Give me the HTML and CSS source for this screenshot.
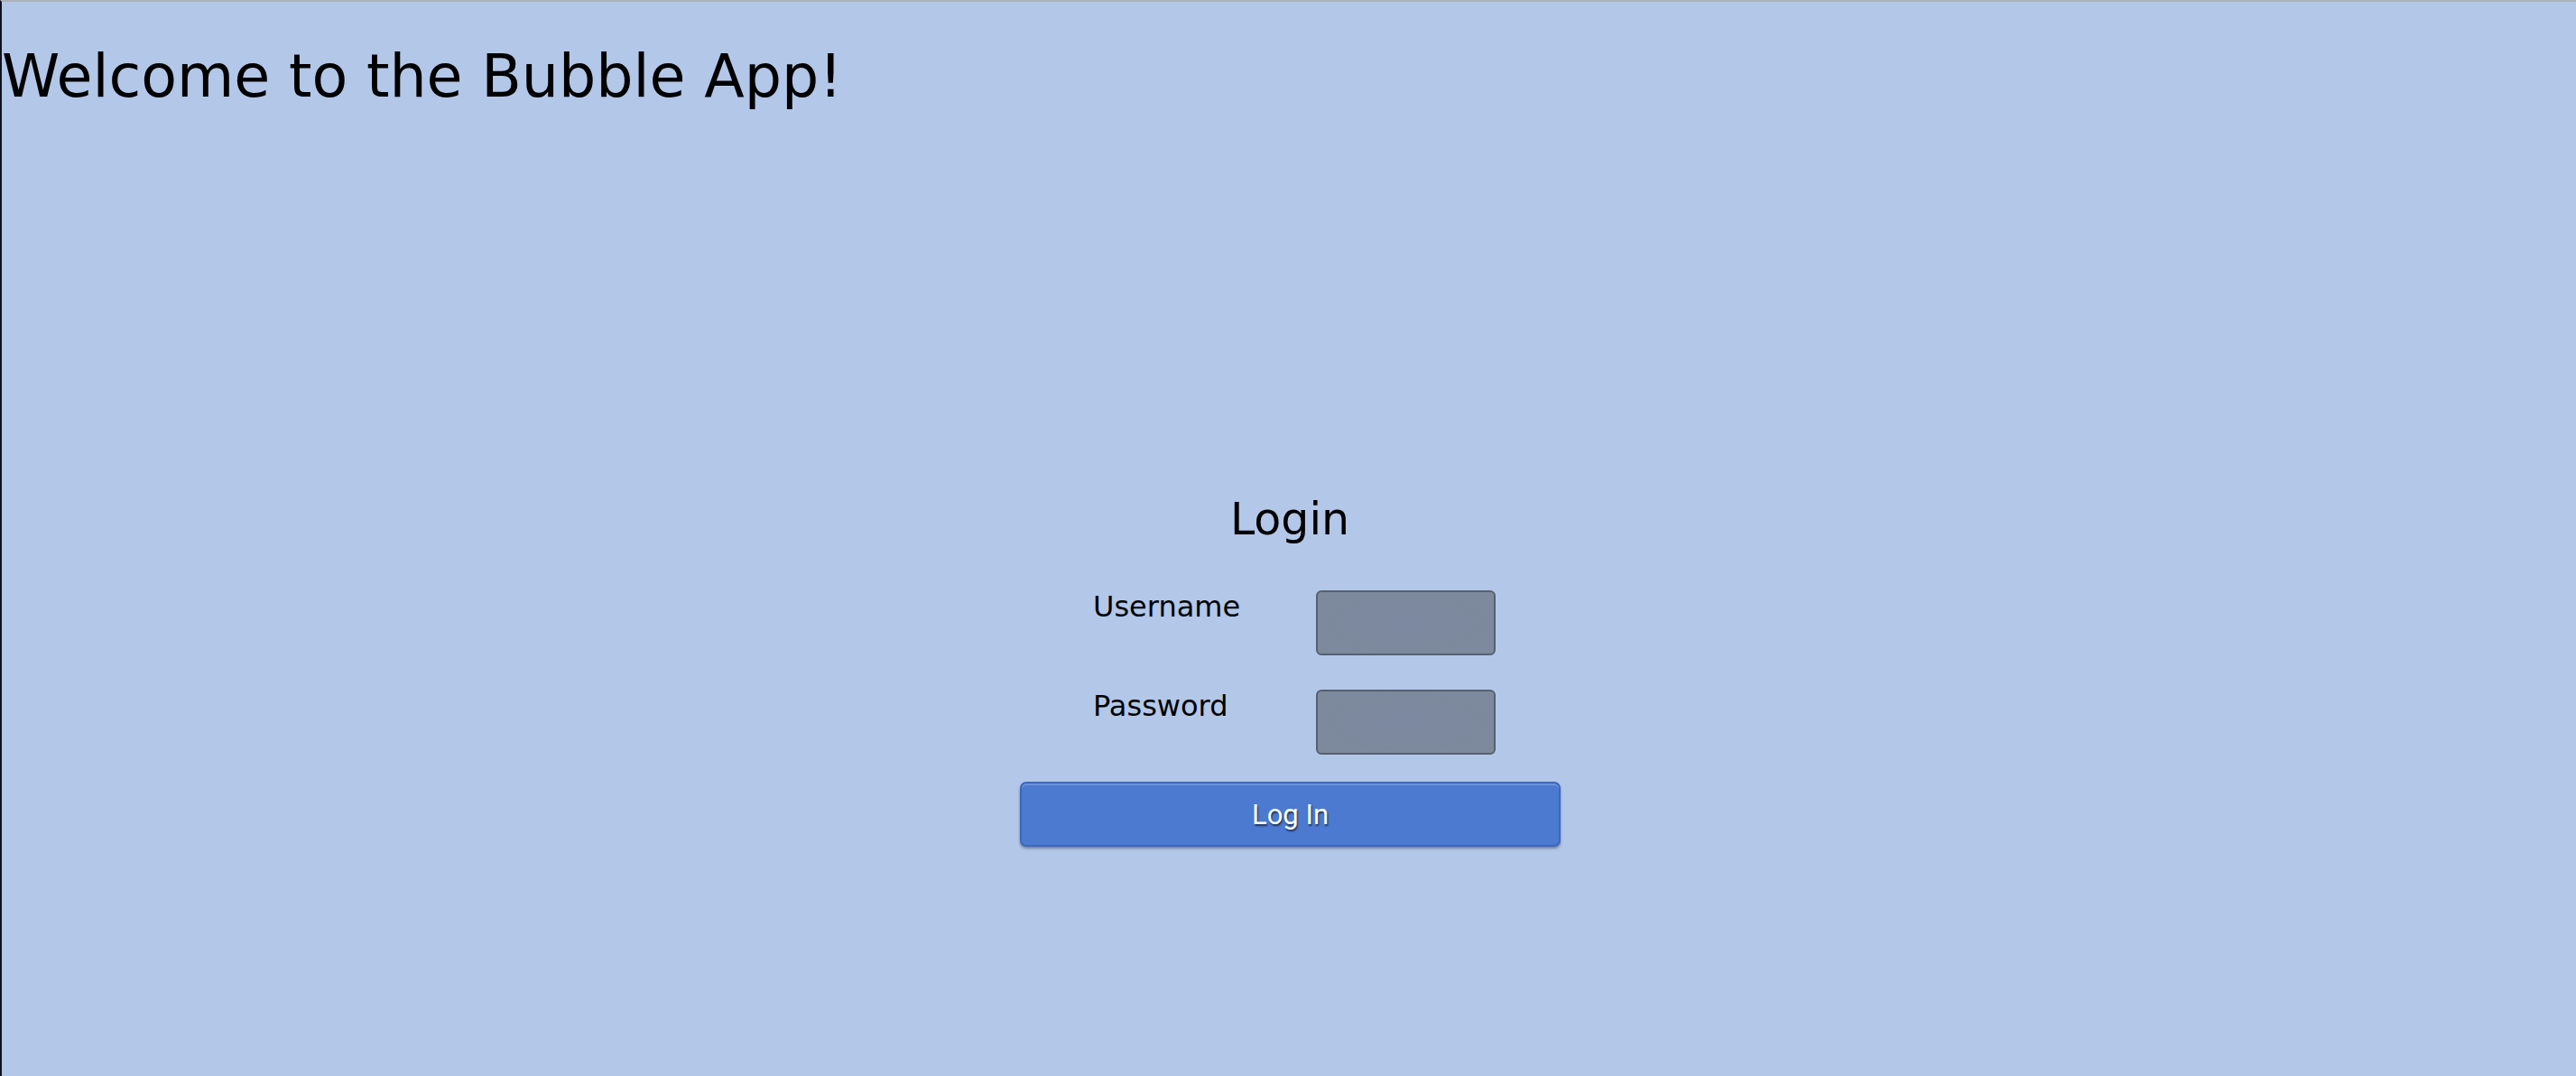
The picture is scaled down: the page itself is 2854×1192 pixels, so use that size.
FILE: index.html
```html
<!DOCTYPE html>
<html lang="en">
<head>
<meta charset="utf-8">
<title>Bubble App</title>
<link rel="stylesheet" href="styles.css">
</head>
<body>
<div class="page">
  <h1 class="welcome">Welcome to the Bubble App!</h1>
  <section class="login">
    <h2 class="login-title">Login</h2>
    <form class="fields">
      <label class="field-label" for="username">Username</label>
      <input class="field-input" id="username" type="text">
      <label class="field-label" for="password">Password</label>
      <input class="field-input" id="password" type="password">
    </form>
    <button class="login-btn" type="button">Log In</button>
  </section>
</div>
</body>
</html>
```
FILE: styles.css
```css
html, body {
  margin: 0;
  padding: 0;
  background: #b3c7e8;
}

.page {
  box-sizing: border-box;
  min-height: 1192px;
  background: #b3c7e8;
  border-top: 2px solid #aab0b9;
  border-left: 2px solid #0e121b;
  font-family: "DejaVu Sans", sans-serif;
  color: #000;
  display: flex;
  flex-direction: column;
}

.welcome {
  margin: 50px 0 0 0;
  font-size: 65px;
  font-weight: normal;
  line-height: 1;
  height: 65px;
}

.login {
  width: 600px;
  margin: 434px auto 0 auto;
  display: flex;
  flex-direction: column;
}

.login-title {
  margin: 0;
  font-size: 49px;
  font-weight: normal;
  line-height: 1;
  height: 49px;
  text-align: center;
  padding-left: 2px;
}

.fields {
  margin: 54px 0 0 83px;
  display: grid;
  grid-template-columns: 247px 199px;
  row-gap: 38px;
}

.field-label {
  font-size: 32px;
  line-height: 1;
  margin-top: 2px;
  align-self: start;
}

.field-input {
  box-sizing: border-box;
  width: 199px;
  height: 72px;
  margin: 0;
  border: 2px solid #56606f;
  border-radius: 6px;
  background: radial-gradient(ellipse at center, #7b889f 0%, #7c899d 60%, #7d8a9c 100%);
  outline: none;
}

.login-btn {
  box-sizing: border-box;
  margin: 30px 0 0 2px;
  width: 599px;
  height: 72px;
  border: 2px solid #3d67bf;
  border-radius: 7px;
  background: #4b7ad0;
  box-shadow: inset 0 2px 0 #6d93dc, 0 2px 3px rgba(0, 0, 0, 0.35);
  color: #fff;
  font-family: Roboto, "Liberation Sans", sans-serif;
  font-size: 31px;
  line-height: 1;
  text-shadow: 1px 2px 2px rgba(0, 0, 0, 0.6);
  display: flex;
  align-items: center;
  justify-content: center;
  padding: 0;
}
```
